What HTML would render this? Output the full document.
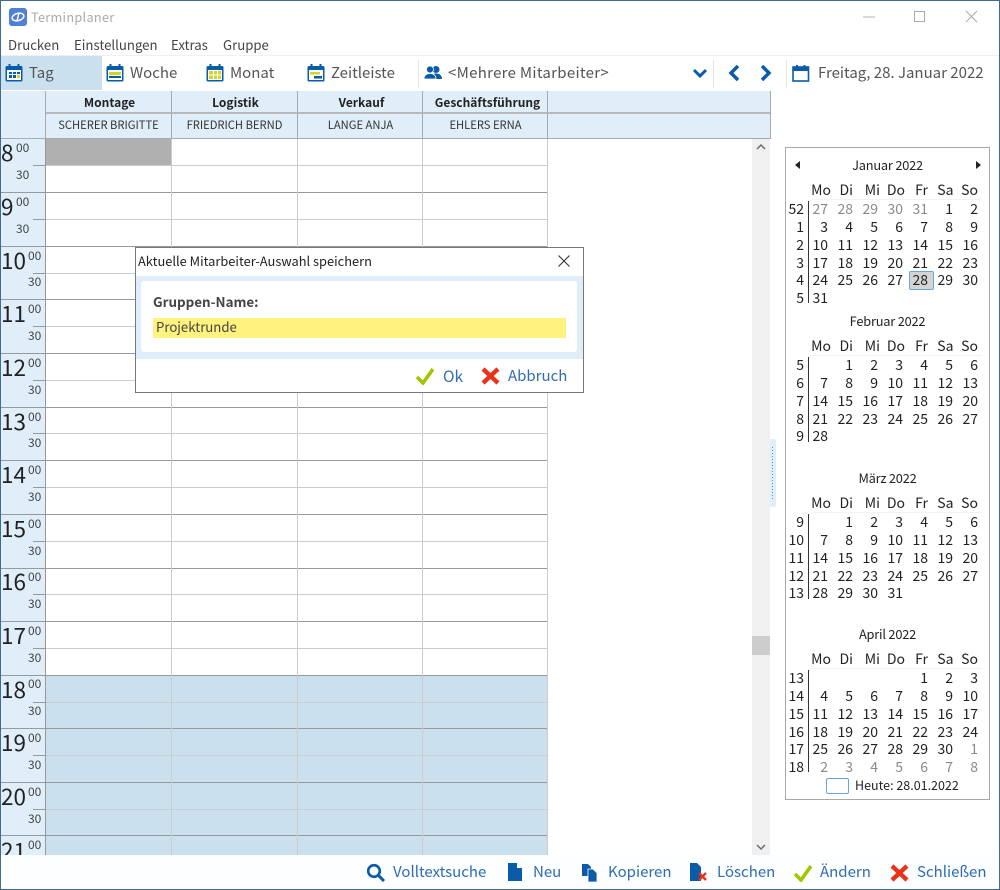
<!DOCTYPE html>
<html lang="de"><head><meta charset="utf-8"><title>Terminplaner</title>
<style>
html,body{margin:0;padding:0;background:#fff}
#w{position:relative;width:1000px;height:890px;overflow:hidden;background:#fff;font-family:"Noto Sans CJK JP","Liberation Sans",sans-serif;color:#222}
#w div,#w span,#w svg{position:absolute}
.t{white-space:nowrap;line-height:20px;height:20px}
.m{font-size:13.2px;top:35px;color:#444}
.b{font-size:15px;top:63px;color:#555}
.hd{width:125px;text-align:center;font-size:12px;font-weight:700;top:93px;color:#222}
.nm{width:125px;text-align:center;font-size:11.2px;top:115px;color:#333}
.hl{left:0;width:548px;height:1px;background:#999}
.hh{left:45px;width:503px;height:1px;background:#ccc}
.tk{left:33px;width:12px;height:1px;background:#999}
.big{left:1px;font-size:22.5px;line-height:28px;margin-top:-1px;color:#222;white-space:nowrap}
.sm{left:16px;font-size:12px;line-height:14px;color:#444}
.v{width:1px;background:#ccc}
.f{font-size:15px;top:862px;color:#2f6db0}
.mo{left:785px;width:205px;height:140px;font-size:14px;color:#222}
.ti{left:0;width:205px;text-align:center;top:-11px;line-height:20px;font-size:12.8px;letter-spacing:-.2px}
.r{left:0;width:205px;height:18px;line-height:18px}
.r span{width:25px;text-align:right;top:0;line-height:18px}
.r .w{left:0;width:19px}
.r .a{left:18px}.r .c{left:43px}.r .d{left:68px}.r .e{left:93px}.r .g{left:118px}.r .h{left:143px}.r .i{left:168px}
.r.k .a{left:21px}.r.k .d{left:70px}.r.k .e{left:95px}.r.k .h{left:143.500px}
.q{color:#8a8a8a}
.vl{left:23px;width:1px;background:#333}
.hu{left:27px;width:170px;height:1px;background:#f2f2f2}
</style></head><body><div id="w">
<svg width="0" height="0" style="left:0;top:0"><defs>
<symbol id="cal" viewBox="0 0 18 18"><rect x="0.5" y="2" width="17" height="15.5" rx="1.5" fill="#0a5ba8"/><rect x="3.5" y="0" width="2" height="4" fill="#0a5ba8"/><rect x="12.5" y="0" width="2" height="4" fill="#0a5ba8"/><rect x="2" y="6" width="14" height="10" fill="#fff"/></symbol>
</defs></svg>

<!-- grid -->
<div style="left:1px;top:91px;width:44px;height:764px;background:#e0eefa"></div>
<div style="left:45px;top:139px;width:502px;height:716px;background:#fff"></div>
<div style="left:45px;top:675px;width:503px;height:180px;background:#cbe0ef"></div>
<div style="left:46px;top:139px;width:125px;height:26px;background:#b0b0b0"></div>

<div style="left:0;top:0;width:548px;height:855px;overflow:hidden">
<div class="hh" style="top:165px"></div><div class="hh" style="top:219px"></div><div class="hh" style="top:273px"></div><div class="hh" style="top:326px"></div><div class="hh" style="top:380px"></div><div class="hh" style="top:433px"></div><div class="hh" style="top:487px"></div><div class="hh" style="top:541px"></div><div class="hh" style="top:594px"></div><div class="hh" style="top:648px"></div><div class="hh" style="top:702px"></div><div class="hh" style="top:755px"></div><div class="hh" style="top:809px"></div>
<div class="tk" style="top:165px"></div><div class="tk" style="top:219px"></div><div class="tk" style="top:273px"></div><div class="tk" style="top:326px"></div><div class="tk" style="top:380px"></div><div class="tk" style="top:433px"></div><div class="tk" style="top:487px"></div><div class="tk" style="top:541px"></div><div class="tk" style="top:594px"></div><div class="tk" style="top:648px"></div><div class="tk" style="top:702px"></div><div class="tk" style="top:755px"></div><div class="tk" style="top:809px"></div>
<div class="hl" style="top:192px"></div><div class="hl" style="top:246px"></div><div class="hl" style="top:299px"></div><div class="hl" style="top:353px"></div><div class="hl" style="top:407px"></div><div class="hl" style="top:460px"></div><div class="hl" style="top:514px"></div><div class="hl" style="top:568px"></div><div class="hl" style="top:621px"></div><div class="hl" style="top:675px"></div><div class="hl" style="top:728px"></div><div class="hl" style="top:782px"></div><div class="hl" style="top:835px"></div>
<div class="v" style="left:171px;top:139px;height:716px"></div><div class="v" style="left:297px;top:139px;height:716px"></div><div class="v" style="left:422px;top:139px;height:716px"></div><div class="v" style="left:547px;top:139px;height:716px"></div>
<div style="left:45px;top:91px;width:1px;height:764px;background:#999"></div>

<div class="big" style="top:139px">8</div><div class="sm" style="top:141px">00</div><div class="sm" style="top:168px">30</div>
<div class="big" style="top:193px">9</div><div class="sm" style="top:195px">00</div><div class="sm" style="top:222px">30</div>
<div class="big" style="top:247px">10</div><div class="sm" style="left:28px;top:249px">00</div><div class="sm" style="left:28px;top:275px">30</div>
<div class="big" style="top:300px">11</div><div class="sm" style="left:28px;top:302px">00</div><div class="sm" style="left:28px;top:329px">30</div>
<div class="big" style="top:354px">12</div><div class="sm" style="left:28px;top:356px">00</div><div class="sm" style="left:28px;top:383px">30</div>
<div class="big" style="top:408px">13</div><div class="sm" style="left:28px;top:410px">00</div><div class="sm" style="left:28px;top:436px">30</div>
<div class="big" style="top:461px">14</div><div class="sm" style="left:28px;top:463px">00</div><div class="sm" style="left:28px;top:490px">30</div>
<div class="big" style="top:515px">15</div><div class="sm" style="left:28px;top:517px">00</div><div class="sm" style="left:28px;top:544px">30</div>
<div class="big" style="top:568px">16</div><div class="sm" style="left:28px;top:570px">00</div><div class="sm" style="left:28px;top:597px">30</div>
<div class="big" style="top:622px">17</div><div class="sm" style="left:28px;top:624px">00</div><div class="sm" style="left:28px;top:651px">30</div>
<div class="big" style="top:676px">18</div><div class="sm" style="left:28px;top:677px">00</div><div class="sm" style="left:28px;top:704px">30</div>
<div class="big" style="top:729px">19</div><div class="sm" style="left:28px;top:731px">00</div><div class="sm" style="left:28px;top:758px">30</div>
<div class="big" style="top:783px">20</div><div class="sm" style="left:28px;top:785px">00</div><div class="sm" style="left:28px;top:812px">30</div>
<div class="big" style="top:837px">21</div><div class="sm" style="left:28px;top:838px">00</div>
</div>

<!-- header -->
<div style="left:1px;top:91px;width:770px;height:47px;background:#e0eefa"></div>
<div style="left:45px;top:112px;width:726px;height:2px;background:#b9b9b9"></div>
<div style="left:1px;top:138px;width:770px;height:1px;background:#aaa"></div>
<div style="left:45px;top:91px;width:1px;height:48px;background:#aaa"></div>
<div style="left:171px;top:91px;width:1px;height:48px;background:#aaa"></div>
<div style="left:297px;top:91px;width:1px;height:48px;background:#aaa"></div>
<div style="left:422px;top:91px;width:1px;height:48px;background:#aaa"></div>
<div style="left:547px;top:91px;width:1px;height:48px;background:#aaa"></div>
<div style="left:770px;top:91px;width:1px;height:48px;background:#aaa"></div>
<div class="t hd" style="left:47px">Montage</div><div class="t hd" style="left:173px">Logistik</div><div class="t hd" style="left:299px">Verkauf</div><div class="t hd" style="left:425px">Geschäftsführung</div>
<div class="t nm" style="left:46px">SCHERER BRIGITTE</div><div class="t nm" style="left:172px">FRIEDRICH BERND</div><div class="t nm" style="left:298px">LANGE ANJA</div><div class="t nm" style="left:423px">EHLERS ERNA</div>

<!-- title -->
<svg style="left:9px;top:8px" width="18" height="18" viewBox="0 0 18 18"><rect width="18" height="18" rx="3" fill="#4f7fd6"/><ellipse cx="9" cy="9" rx="6" ry="3.6" fill="none" stroke="#fff" stroke-width="1.5" transform="rotate(-15 9 9)"/><path d="M8 13L10 5" stroke="#fff" stroke-width="1.5"/></svg>
<div class="t" style="left:31px;top:7px;font-size:12.7px;color:#aaa;letter-spacing:.3px">Terminplaner</div>
<svg style="left:860px;top:7px" width="125" height="20" viewBox="0 0 125 20"><path d="M3 10H15" stroke="#b0b0b0"/><rect x="54.5" y="4.5" width="10" height="10" fill="none" stroke="#aaa"/><path d="M106 4L117 15M117 4L106 15" stroke="#aaa"/></svg>
<div class="t m" style="left:8px">Drucken</div><div class="t m" style="left:74px">Einstellungen</div><div class="t m" style="left:171px">Extras</div><div class="t m" style="left:223px">Gruppe</div>

<!-- toolbar -->
<div style="left:1px;top:55px;width:998px;height:1px;background:#f0f0f0"></div>
<div style="left:1px;top:56px;width:101px;height:34px;background:#cbe0ef"></div>
<div style="left:418px;top:60px;width:1px;height:28px;background:#e6e6e6"></div>
<div style="left:713px;top:60px;width:1px;height:28px;background:#e6e6e6"></div>
<div style="left:786px;top:60px;width:1px;height:28px;background:#e6e6e6"></div>
<svg style="left:5px;top:64px" width="18" height="18"><use href="#cal"/><path d="M4 8h3v2H4zM8 8h3v2H8zM12 8h3v2h-3zM4 11h3v3H4zM8 11h3v3H8z" fill="#0a5ba8"/><path d="M12 11h3v3h-3z" fill="#d2d628"/></svg>
<svg style="left:106px;top:64px" width="18" height="18"><use href="#cal"/><path d="M3 8h12v3H3z" fill="#d2d628"/><path d="M3 12h12v2H3z" fill="#0a5ba8"/></svg>
<svg style="left:206px;top:64px" width="18" height="18"><use href="#cal"/><path d="M3 7h12v8H3z" fill="#d2d628"/><path d="M7 7h1v8H7zM11 7h1v8h-1zM3 10.5h12v1H3z" fill="#fff"/></svg>
<svg style="left:307px;top:64px" width="18" height="18"><use href="#cal"/><path d="M3 8h10v2.5H3z" fill="#d2d628"/><path d="M7 12h8v2.5H7z" fill="#0a5ba8"/></svg>
<div class="t b" style="left:29px">Tag</div><div class="t b" style="left:130px">Woche</div><div class="t b" style="left:230px">Monat</div><div class="t b" style="left:331px">Zeitleiste</div>
<svg style="left:424px;top:65px" width="18" height="16" viewBox="0 0 18 16"><circle cx="12" cy="4.5" r="3.5" fill="#0a5ba8"/><path d="M6 14c0-4 3-5.5 6-5.500s6 1.500 6 5.500z" fill="#0a5ba8"/><circle cx="6" cy="4.500" r="3.500" fill="#0a5ba8" stroke="#fff" stroke-width=".8"/><path d="M0 14c0-4 3-5.500 6-5.500s6 1.500 6 5.500z" fill="#0a5ba8" stroke="#fff" stroke-width=".8"/></svg>
<div class="t b" style="left:448px;letter-spacing:.3px">&lt;Mehrere Mitarbeiter&gt;</div>
<svg style="left:692px;top:67px" width="16" height="12" viewBox="0 0 16 12"><path d="M2 3L8 9L14 3" fill="none" stroke="#0a5ba8" stroke-width="3"/></svg>
<svg style="left:727px;top:64px" width="14" height="18" viewBox="0 0 14 18"><path d="M11 2L4 9L11 16" fill="none" stroke="#0a5ba8" stroke-width="3.500"/></svg>
<svg style="left:759px;top:64px" width="14" height="18" viewBox="0 0 14 18"><path d="M3 2L10 9L3 16" fill="none" stroke="#0a5ba8" stroke-width="3.500"/></svg>
<svg style="left:792px;top:64px" width="18" height="18" viewBox="0 0 18 18"><rect x="1" y="3" width="15.500" height="14" fill="none" stroke="#0a5ba8" stroke-width="1.600"/><rect x="1" y="3" width="15.500" height="4" fill="#0a5ba8"/><rect x="4" y="1" width="2" height="3" fill="#0a5ba8"/><rect x="11.500" y="1" width="2" height="3" fill="#0a5ba8"/></svg>
<div class="t b" style="left:818px">Freitag, 28. Januar 2022</div>

<!-- scrollbar -->
<div style="left:752px;top:139px;width:18px;height:716px;background:#f0f0f0"></div>
<div style="left:752px;top:636px;width:18px;height:19px;background:#cdcdcd"></div>
<svg style="left:752px;top:139px" width="18" height="16" viewBox="0 0 18 16"><path d="M5 10L9 6L13 10" fill="none" stroke="#666" stroke-width="1.400"/></svg>
<svg style="left:752px;top:839px" width="18" height="16" viewBox="0 0 18 16"><path d="M5 6L9 10L13 6" fill="none" stroke="#666" stroke-width="1.400"/></svg>
<div style="left:770px;top:439px;width:6px;height:68px;background:#e0eefa;border-radius:2px"></div>
<div style="left:772px;top:447px;width:1px;height:52px;background:repeating-linear-gradient(#3f8fd6 0 1px,transparent 1px 3px)"></div>

<!-- calendar -->
<div style="left:785px;top:147px;width:203px;height:651px;border:1px solid #a9a9a9;background:#fff"></div>
<svg style="left:793px;top:160px" width="190" height="10" viewBox="0 0 190 10"><path d="M7 1V9L2 5z" fill="#222"/><path d="M183 1V9L188 5z" fill="#222"/></svg>

<div class="mo" style="top:166px">
<div class="t ti">Januar 2022</div>
<div class="r k" style="top:15px"><span class="a">Mo</span><span class="c">Di</span><span class="d">Mi</span><span class="e">Do</span><span class="g">Fr</span><span class="h">Sa</span><span class="i">So</span></div>
<div class="hu" style="top:33px"></div><div class="vl" style="top:35px;height:102px"></div>
<div class="r" style="top:34px"><span class="w">52</span><span class="a q">27</span><span class="c q">28</span><span class="d q">29</span><span class="e q">30</span><span class="g q">31</span><span class="h">1</span><span class="i">2</span></div>
<div class="r" style="top:52px"><span class="w">1</span><span class="a">3</span><span class="c">4</span><span class="d">5</span><span class="e">6</span><span class="g">7</span><span class="h">8</span><span class="i">9</span></div>
<div class="r" style="top:70px"><span class="w">2</span><span class="a">10</span><span class="c">11</span><span class="d">12</span><span class="e">13</span><span class="g">14</span><span class="h">15</span><span class="i">16</span></div>
<div class="r" style="top:88px"><span class="w">3</span><span class="a">17</span><span class="c">18</span><span class="d">19</span><span class="e">20</span><span class="g">21</span><span class="h">22</span><span class="i">23</span></div>
<div style="left:124px;top:105px;width:23px;height:17px;background:#d4d4d4;border:1px solid #6aa6d8;border-radius:2px"></div>
<div class="r" style="top:105px"><span class="w">4</span><span class="a">24</span><span class="c">25</span><span class="d">26</span><span class="e">27</span><span class="g">28</span><span class="h">29</span><span class="i">30</span></div>
<div class="r" style="top:123px"><span class="w">5</span><span class="a">31</span></div>
</div>

<div class="mo" style="top:322px">
<div class="t ti">Februar 2022</div>
<div class="r k" style="top:15px"><span class="a">Mo</span><span class="c">Di</span><span class="d">Mi</span><span class="e">Do</span><span class="g">Fr</span><span class="h">Sa</span><span class="i">So</span></div>
<div class="hu" style="top:33px"></div><div class="vl" style="top:35px;height:85px"></div>
<div class="r" style="top:34px"><span class="w">5</span><span class="c">1</span><span class="d">2</span><span class="e">3</span><span class="g">4</span><span class="h">5</span><span class="i">6</span></div>
<div class="r" style="top:52px"><span class="w">6</span><span class="a">7</span><span class="c">8</span><span class="d">9</span><span class="e">10</span><span class="g">11</span><span class="h">12</span><span class="i">13</span></div>
<div class="r" style="top:70px"><span class="w">7</span><span class="a">14</span><span class="c">15</span><span class="d">16</span><span class="e">17</span><span class="g">18</span><span class="h">19</span><span class="i">20</span></div>
<div class="r" style="top:88px"><span class="w">8</span><span class="a">21</span><span class="c">22</span><span class="d">23</span><span class="e">24</span><span class="g">25</span><span class="h">26</span><span class="i">27</span></div>
<div class="r" style="top:105px"><span class="w">9</span><span class="a">28</span></div>
</div>

<div class="mo" style="top:479px">
<div class="t ti">März 2022</div>
<div class="r k" style="top:15px"><span class="a">Mo</span><span class="c">Di</span><span class="d">Mi</span><span class="e">Do</span><span class="g">Fr</span><span class="h">Sa</span><span class="i">So</span></div>
<div class="hu" style="top:33px"></div><div class="vl" style="top:35px;height:85px"></div>
<div class="r" style="top:34px"><span class="w">9</span><span class="c">1</span><span class="d">2</span><span class="e">3</span><span class="g">4</span><span class="h">5</span><span class="i">6</span></div>
<div class="r" style="top:52px"><span class="w">10</span><span class="a">7</span><span class="c">8</span><span class="d">9</span><span class="e">10</span><span class="g">11</span><span class="h">12</span><span class="i">13</span></div>
<div class="r" style="top:70px"><span class="w">11</span><span class="a">14</span><span class="c">15</span><span class="d">16</span><span class="e">17</span><span class="g">18</span><span class="h">19</span><span class="i">20</span></div>
<div class="r" style="top:88px"><span class="w">12</span><span class="a">21</span><span class="c">22</span><span class="d">23</span><span class="e">24</span><span class="g">25</span><span class="h">26</span><span class="i">27</span></div>
<div class="r" style="top:105px"><span class="w">13</span><span class="a">28</span><span class="c">29</span><span class="d">30</span><span class="e">31</span></div>
</div>

<div class="mo" style="top:635px">
<div class="t ti">April 2022</div>
<div class="r k" style="top:15px"><span class="a">Mo</span><span class="c">Di</span><span class="d">Mi</span><span class="e">Do</span><span class="g">Fr</span><span class="h">Sa</span><span class="i">So</span></div>
<div class="hu" style="top:33px"></div><div class="vl" style="top:35px;height:102px"></div>
<div class="r" style="top:34px"><span class="w">13</span><span class="g">1</span><span class="h">2</span><span class="i">3</span></div>
<div class="r" style="top:52px"><span class="w">14</span><span class="a">4</span><span class="c">5</span><span class="d">6</span><span class="e">7</span><span class="g">8</span><span class="h">9</span><span class="i">10</span></div>
<div class="r" style="top:70px"><span class="w">15</span><span class="a">11</span><span class="c">12</span><span class="d">13</span><span class="e">14</span><span class="g">15</span><span class="h">16</span><span class="i">17</span></div>
<div class="r" style="top:88px"><span class="w">16</span><span class="a">18</span><span class="c">19</span><span class="d">20</span><span class="e">21</span><span class="g">22</span><span class="h">23</span><span class="i">24</span></div>
<div class="r" style="top:105px"><span class="w">17</span><span class="a">25</span><span class="c">26</span><span class="d">27</span><span class="e">28</span><span class="g">29</span><span class="h">30</span><span class="i q">1</span></div>
<div class="r" style="top:123px"><span class="w">18</span><span class="a q">2</span><span class="c q">3</span><span class="d q">4</span><span class="e q">5</span><span class="g q">6</span><span class="h q">7</span><span class="i q">8</span></div>
</div>
<div style="left:826px;top:778px;width:21px;height:14px;border:1px solid #6aa6d8;border-radius:2px;background:#fff"></div>
<div class="t" style="left:855px;top:775px;font-size:12.500px">Heute: 28.01.2022</div>

<!-- dialog -->
<div style="left:135px;top:247px;width:447px;height:144px;border:1px solid #777;background:#fff"></div>
<div style="left:136px;top:276px;width:447px;height:83px;background:#e0eefa"></div>
<div style="left:141px;top:281px;width:436px;height:71px;background:#fff;border-radius:3px"></div>
<div style="left:153px;top:318px;width:413px;height:20px;background:#fff27f"></div>
<div class="t" style="left:138px;top:251px;font-size:12.850px;color:#222">Aktuelle Mitarbeiter-Auswahl speichern</div>
<svg style="left:557px;top:254px" width="14" height="14" viewBox="0 0 14 14"><path d="M1.500 1.500L12.500 12.500M12.500 1.500L1.500 12.500" stroke="#333" stroke-width="1.100"/></svg>
<div class="t" style="left:153px;top:291px;font-size:13.400px;font-weight:700;color:#444">Gruppen-Name:</div>
<div class="t" style="left:156px;top:317px;font-size:13.200px;color:#444">Projektrunde</div>
<svg style="left:416px;top:367px" width="18" height="18" viewBox="0 0 18 18"><path d="M1 10L7 16L17 2" fill="none" stroke="#a5c400" stroke-width="3.600"/></svg>
<div class="t" style="left:443px;top:366px;font-size:15.500px;color:#2f6db0">Ok</div>
<svg style="left:481px;top:367px" width="19" height="18" viewBox="0 0 19 18"><path d="M2 2L17 16M17 2L2 16" stroke="#e8321a" stroke-width="4.400"/></svg>
<div class="t" style="left:508px;top:366px;font-size:15px;color:#2f6db0">Abbruch</div>

<!-- footer -->
<div style="left:1px;top:855px;width:998px;height:33px;background:#fdfeff"></div>
<svg style="left:366px;top:863px" width="20" height="19" viewBox="0 0 20 19"><circle cx="8" cy="8" r="5.800" fill="none" stroke="#0a5ba8" stroke-width="2.600"/><path d="M12 12L18 18" stroke="#0a5ba8" stroke-width="3"/></svg>
<div class="t f" style="left:393px">Volltextsuche</div>
<svg style="left:507px;top:863px" width="16" height="18" viewBox="0 0 16 18"><path d="M1 0H10L15 5V18H1z" fill="#0a5ba8"/><path d="M10 0V5H15" fill="#fff"/></svg>
<div class="t f" style="left:533px">Neu</div>
<svg style="left:581px;top:863px" width="17" height="19" viewBox="0 0 17 19"><path d="M1 1H7L10 4V13H1z" fill="#0a5ba8"/><path d="M7 6H12L16 10V19H7z" fill="#0a5ba8" stroke="#fff" stroke-width=".8"/></svg>
<div class="t f" style="left:608px">Kopieren</div>
<svg style="left:690px;top:863px" width="18" height="19" viewBox="0 0 18 19"><path d="M0 0H7L11 4V18H0z" fill="#0a5ba8"/><path d="M9 10L16 17M16 10L9 17" stroke="#e8321a" stroke-width="2.400"/></svg>
<div class="t f" style="left:717px">Löschen</div>
<svg style="left:794px;top:864px" width="18" height="18" viewBox="0 0 18 18"><path d="M1 10L7 16L17 2" fill="none" stroke="#a5c400" stroke-width="3.600"/></svg>
<div class="t f" style="left:820px">Ändern</div>
<svg style="left:890px;top:864px" width="19" height="18" viewBox="0 0 19 18"><path d="M2 2L17 16M17 2L2 16" stroke="#e8321a" stroke-width="4.400"/></svg>
<div class="t f" style="left:917px">Schließen</div>

<!-- window border -->
<div style="left:0;top:0;width:998px;height:888px;border:1px solid #3f6c92"></div>
</div></body></html>
